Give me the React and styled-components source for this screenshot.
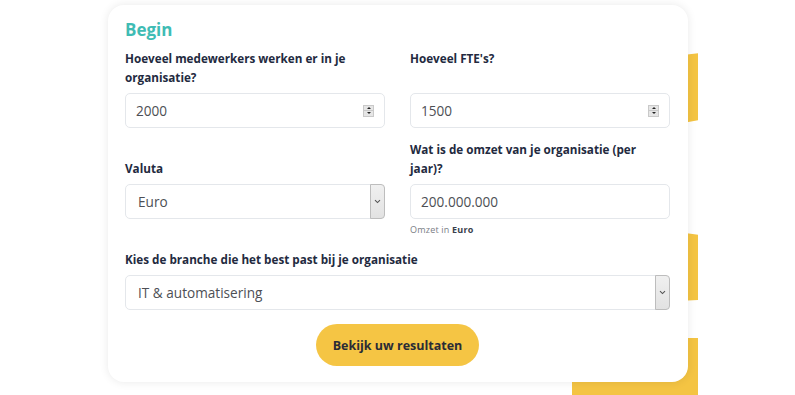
import React from "react";
import styled, { createGlobalStyle } from "styled-components";

const GlobalStyle = createGlobalStyle`
  html, body {
    margin: 0;
    padding: 0;
    background: #ffffff;
  }
  body {
    font-family: "Open Sans", "Liberation Sans", sans-serif;
  }
`;

const Stage = styled.div`
  position: relative;
  width: 600px;
  height: 395px;
  margin-left: 98px;
  overflow: hidden;
`;

const Blobs = styled.svg`
  position: absolute;
  left: 0;
  top: 0;
  width: 600px;
  height: 395px;
  z-index: 0;
`;

const Card = styled.div`
  position: relative;
  z-index: 1;
  margin: 5px 10px 0 10px;
  width: 580px;
  height: 377px;
  box-sizing: border-box;
  background: #ffffff;
  border-radius: 16px;
  box-shadow: 0 0 10px rgba(0, 0, 0, 0.09);
  padding: 13px 18px 0 17px;
  display: flex;
  flex-direction: column;
`;

const Title = styled.h2`
  margin: 0;
  font-size: 17px;
  line-height: 24px;
  font-weight: 700;
  color: #3fbcb4;
`;

const FormGrid = styled.div`
  display: grid;
  grid-template-columns: 1fr 1fr;
  column-gap: 25px;
  margin-top: 7px;
`;

const Label = styled.label`
  display: block;
  align-self: ${(p) => p.$align || "start"};
  margin-top: ${(p) => p.$top || 0}px;
  margin-bottom: 6px;
  font-size: 11.7px;
  line-height: 19px;
  font-weight: 700;
  color: #232a40;
`;

const Box = styled.div`
  position: relative;
  display: flex;
  align-items: center;
  height: 35px;
  box-sizing: border-box;
  border: 1px solid #e4e7eb;
  border-radius: 5px;
  background: #fff;
  padding-left: ${(p) => p.$pad || 10}px;
  font-size: 13.6px;
  color: #4d4f55;
`;

const Value = styled.span`
  flex: 1;
`;

const Spinner = styled.span`
  display: flex;
  flex-direction: column;
  width: 11px;
  height: 12px;
  margin-right: 10px;
  border: 1px solid #c9c9c9;
  background: #e6e6e6;
  box-sizing: border-box;
`;

const SpinHalf = styled.span`
  flex: 1;
  display: flex;
  align-items: center;
  justify-content: center;
  &:first-child {
    border-bottom: 1px solid #c9c9c9;
  }
  &::after {
    content: "";
    border-left: 2.5px solid transparent;
    border-right: 2.5px solid transparent;
    ${(p) =>
      p.$up
        ? "border-bottom: 2.5px solid #222;"
        : "border-top: 2.5px solid #222;"}
  }
`;

const SelectArrow = styled.span`
  align-self: stretch;
  width: 13px;
  margin: -1px -1px -1px 0;
  display: flex;
  align-items: center;
  justify-content: center;
  background: linear-gradient(#f0f0f0, #e2e2e2);
  border: 1px solid #bdbdbd;
  border-radius: 0 4px 4px 0;
`;

const Hint = styled.div`
  margin-top: 5px;
  font-size: 9px;
  line-height: 12px;
  letter-spacing: 0.2px;
  color: #7a7d85;
  b {
    color: #3a3f4d;
    font-weight: 700;
  }
`;

const BranchLabel = styled(Label)`
  margin-top: 14px;
`;

const Actions = styled.div`
  display: flex;
  justify-content: center;
  margin-top: 14px;
`;

const Button = styled.button`
  height: 42px;
  width: 163px;
  border: none;
  border-radius: 21px;
  background: #f5c544;
  font-family: inherit;
  font-size: 12.5px;
  font-weight: 700;
  color: #2a2c36;
  cursor: pointer;
`;

const NumberField = ({ value }) => (
  <Box>
    <Value>{value}</Value>
    <Spinner>
      <SpinHalf $up />
      <SpinHalf />
    </Spinner>
  </Box>
);

const Chevron = () => (
  <svg width="7" height="5" viewBox="0 0 7 5">
    <path d="M1 1.2 L3.5 3.6 L6 1.2" fill="none" stroke="#555" strokeWidth="1.1" />
  </svg>
);

const SelectField = ({ value }) => (
  <Box $pad={12}>
    <Value>{value}</Value>
    <SelectArrow>
      <Chevron />
    </SelectArrow>
  </Box>
);

export default function App() {
  return (
    <>
      <GlobalStyle />
      <Stage>
        <Blobs viewBox="0 0 600 395">
          <polygon points="585,55 602,53 602,120 585,123" fill="#f4c443" />
          <polygon points="580,232 602,235 602,300 580,301" fill="#f4c443" />
          <polygon points="474,338 602,338 602,395 474,395" fill="#f4c443" />
        </Blobs>
        <Card>
          <Title>Begin</Title>
          <FormGrid>
            <Label>Hoeveel medewerkers werken er in je organisatie?</Label>
            <Label>Hoeveel FTE's?</Label>
            <NumberField value="2000" />
            <NumberField value="1500" />
            <Label $align="end" $top={12}>Valuta</Label>
            <Label $align="end" $top={12}>
              Wat is de omzet van je organisatie (per jaar)?
            </Label>
            <SelectField value="Euro" />
            <Box>
              <Value>200.000.000</Value>
            </Box>
            <div />
            <Hint>
              Omzet in <b>Euro</b>
            </Hint>
          </FormGrid>
          <BranchLabel>Kies de branche die het best past bij je organisatie</BranchLabel>
          <SelectField value="IT & automatisering" />
          <Actions>
            <Button>Bekijk uw resultaten</Button>
          </Actions>
        </Card>
      </Stage>
    </>
  );
}
